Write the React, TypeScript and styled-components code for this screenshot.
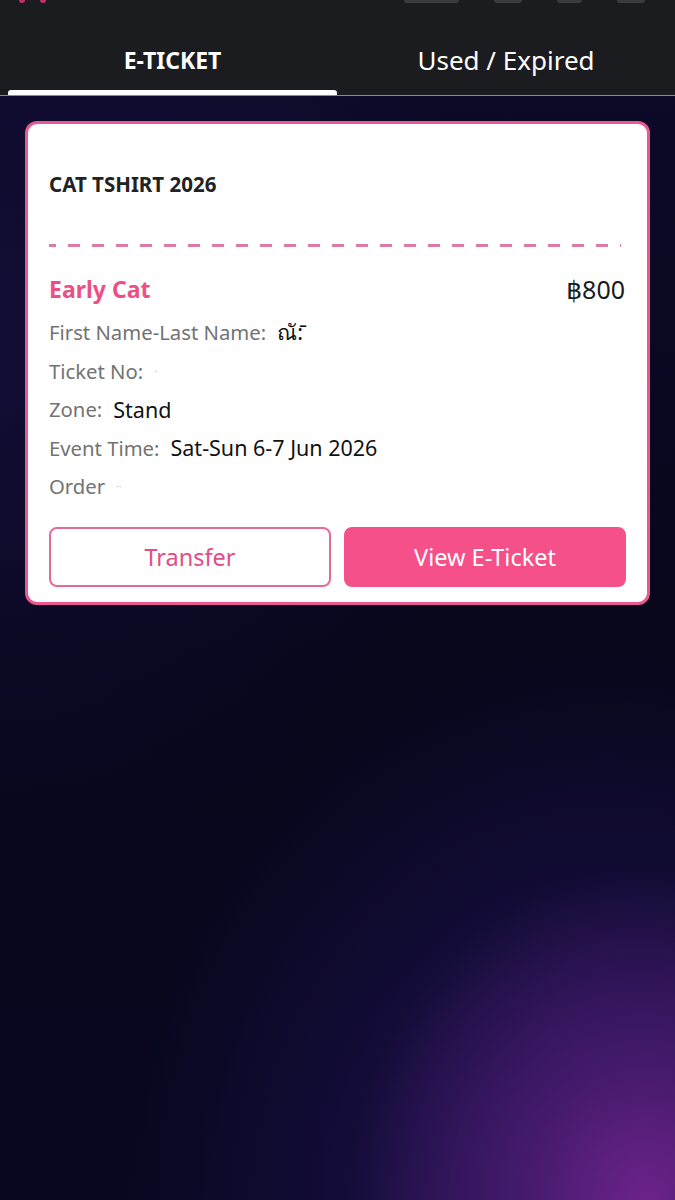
import styled, { createGlobalStyle } from 'styled-components';

const GlobalStyle = createGlobalStyle`
  html, body {
    margin: 0;
    padding: 0;
    background: #08071c;
  }
  body {
    font-family: 'Noto Sans', 'DejaVu Sans', sans-serif;
  }
  * {
    box-sizing: border-box;
  }
`;

const Page = styled.div`
  min-height: 1200px;
  display: flex;
  flex-direction: column;
  background:
    radial-gradient(ellipse 300px 330px at 96% 100%, rgba(112, 36, 138, 0.95) 0%, rgba(86, 30, 124, 0.7) 40%, transparent 100%),
    radial-gradient(ellipse 480px 560px at 90% 100%, rgba(44, 22, 100, 0.85) 0%, rgba(30, 18, 80, 0.55) 50%, transparent 100%),
    radial-gradient(ellipse 260px 80px at 100% 0%, rgba(70, 20, 90, 0.55) 0%, transparent 100%),
    radial-gradient(ellipse 500px 500px at 0% 30%, rgba(24, 18, 70, 0.55) 0%, transparent 100%),
    linear-gradient(180deg, #0d0a2a 0%, #07061a 55%, #080720 100%);
`;

const TopBar = styled.header`
  background: #1b1c20;
  border-bottom: 1px solid #8a8a92;
  display: flex;
  flex-direction: column;
`;

const CutRow = styled.div`
  height: 4px;
  display: flex;
  justify-content: space-between;
  align-items: flex-start;
  padding: 0 30px 0 19px;
  overflow: hidden;
`;

const Group = styled.div<{ $gap: number }>`
  display: flex;
  gap: ${(p) => p.$gap}px;
`;

const LogoDot = styled.span`
  width: 6px;
  height: 3px;
  border-radius: 0 0 3px 3px;
  background: #c0306e;
`;

const Pill = styled.span<{ $w: number }>`
  width: ${(p) => p.$w}px;
  height: 3px;
  border-radius: 0 0 6px 6px;
  background: #3a3b41;
`;

const Tabs = styled.nav`
  display: grid;
  grid-template-columns: 337px 1fr;
`;

const Tab = styled.div`
  display: flex;
  flex-direction: column;
  align-items: stretch;
  padding-top: 41px;
`;

const TabLabel = styled.span<{ $active?: boolean }>`
  height: 30px;
  line-height: 30px;
  text-align: center;
  color: #ffffff;
  font-size: ${(p) => (p.$active ? '23px' : '26px')};
  font-weight: ${(p) => (p.$active ? 700 : 400)};
  padding-left: ${(p) => (p.$active ? '8px' : '0')};
`;

const Indicator = styled.span<{ $active?: boolean }>`
  margin: 15px 0 0 8px;
  height: 5px;
  border-radius: 3px 3px 0 0;
  background: ${(p) => (p.$active ? '#ffffff' : 'transparent')};
`;

const Card = styled.section`
  margin: 25px 25px 0;
  border: 3px solid #e9588e;
  border-radius: 12px;
  background: #ffffff;
  padding: 46px 21px 15px;
  display: flex;
  flex-direction: column;
`;

const EventTitle = styled.h2`
  margin: 0;
  line-height: 28px;
  font-size: 20.5px;
  font-weight: 700;
  color: #222222;
`;

const Perforation = styled.div`
  margin-top: 46px;
  width: 572px;
  height: 3px;
  background: repeating-linear-gradient(
    90deg,
    #dc7ba8 0 7px,
    transparent 7px 19px,
    #dc7ba8 19px 24px
  );
`;

const PriceRow = styled.div`
  margin-top: 27px;
  display: flex;
  justify-content: space-between;
  align-items: center;
  height: 30px;
`;

const TicketType = styled.span`
  font-size: 23px;
  font-weight: 700;
  color: #ec4f86;
`;

const Price = styled.span`
  font-size: 25px;
  color: #1a1a1a;
  margin-right: 1px;
`;

const InfoList = styled.dl`
  margin: 9px 0 0;
  display: flex;
  flex-direction: column;
`;

const InfoRow = styled.div`
  height: 38.5px;
  display: flex;
  align-items: center;
  gap: 11px;
`;

const Label = styled.dt`
  color: #737373;
  font-size: 20.3px;
`;

const Value = styled.dd<{ $masked?: boolean }>`
  margin: 0;
  color: ${(p) => (p.$masked ? '#c8c8c8' : '#111111')};
  font-size: ${(p) => (p.$masked ? '10px' : '21.5px')};
`;

const Actions = styled.div`
  margin-top: 21px;
  display: grid;
  grid-template-columns: 1fr 1fr;
  gap: 13px;
`;

const ActionButton = styled.button<{ $primary?: boolean }>`
  height: 60px;
  border-radius: 8px;
  border: 2px solid ${(p) => (p.$primary ? '#f5508a' : '#e46a98')};
  background: ${(p) => (p.$primary ? '#f5508a' : '#ffffff')};
  color: ${(p) => (p.$primary ? '#ffffff' : '#e34d84')};
  font-family: inherit;
  font-size: 23.5px;
  cursor: pointer;
`;

const info = [
  { label: 'First Name-Last Name:', value: 'ณั:̄' },
  { label: 'Ticket No:', value: '·', masked: true },
  { label: 'Zone:', value: 'Stand' },
  { label: 'Event Time:', value: 'Sat-Sun 6-7 Jun 2026' },
  { label: 'Order', value: '··', masked: true },
];

export default function App() {
  return (
    <>
      <GlobalStyle />
      <Page>
        <TopBar>
          <CutRow>
            <Group $gap={15}>
              <LogoDot />
              <LogoDot />
            </Group>
            <Group $gap={35}>
              <Pill $w={55} />
              <Pill $w={28} />
              <Pill $w={25} />
              <Pill $w={28} />
            </Group>
          </CutRow>
          <Tabs>
            <Tab>
              <TabLabel $active>E-TICKET</TabLabel>
              <Indicator $active />
            </Tab>
            <Tab>
              <TabLabel>Used / Expired</TabLabel>
              <Indicator />
            </Tab>
          </Tabs>
        </TopBar>

        <Card>
          <EventTitle>CAT TSHIRT 2026</EventTitle>
          <Perforation />
          <PriceRow>
            <TicketType>Early Cat</TicketType>
            <Price>฿800</Price>
          </PriceRow>
          <InfoList>
            {info.map((row) => (
              <InfoRow key={row.label}>
                <Label>{row.label}</Label>
                <Value $masked={row.masked}>{row.value}</Value>
              </InfoRow>
            ))}
          </InfoList>
          <Actions>
            <ActionButton>Transfer</ActionButton>
            <ActionButton $primary>View E-Ticket</ActionButton>
          </Actions>
        </Card>
      </Page>
    </>
  );
}
